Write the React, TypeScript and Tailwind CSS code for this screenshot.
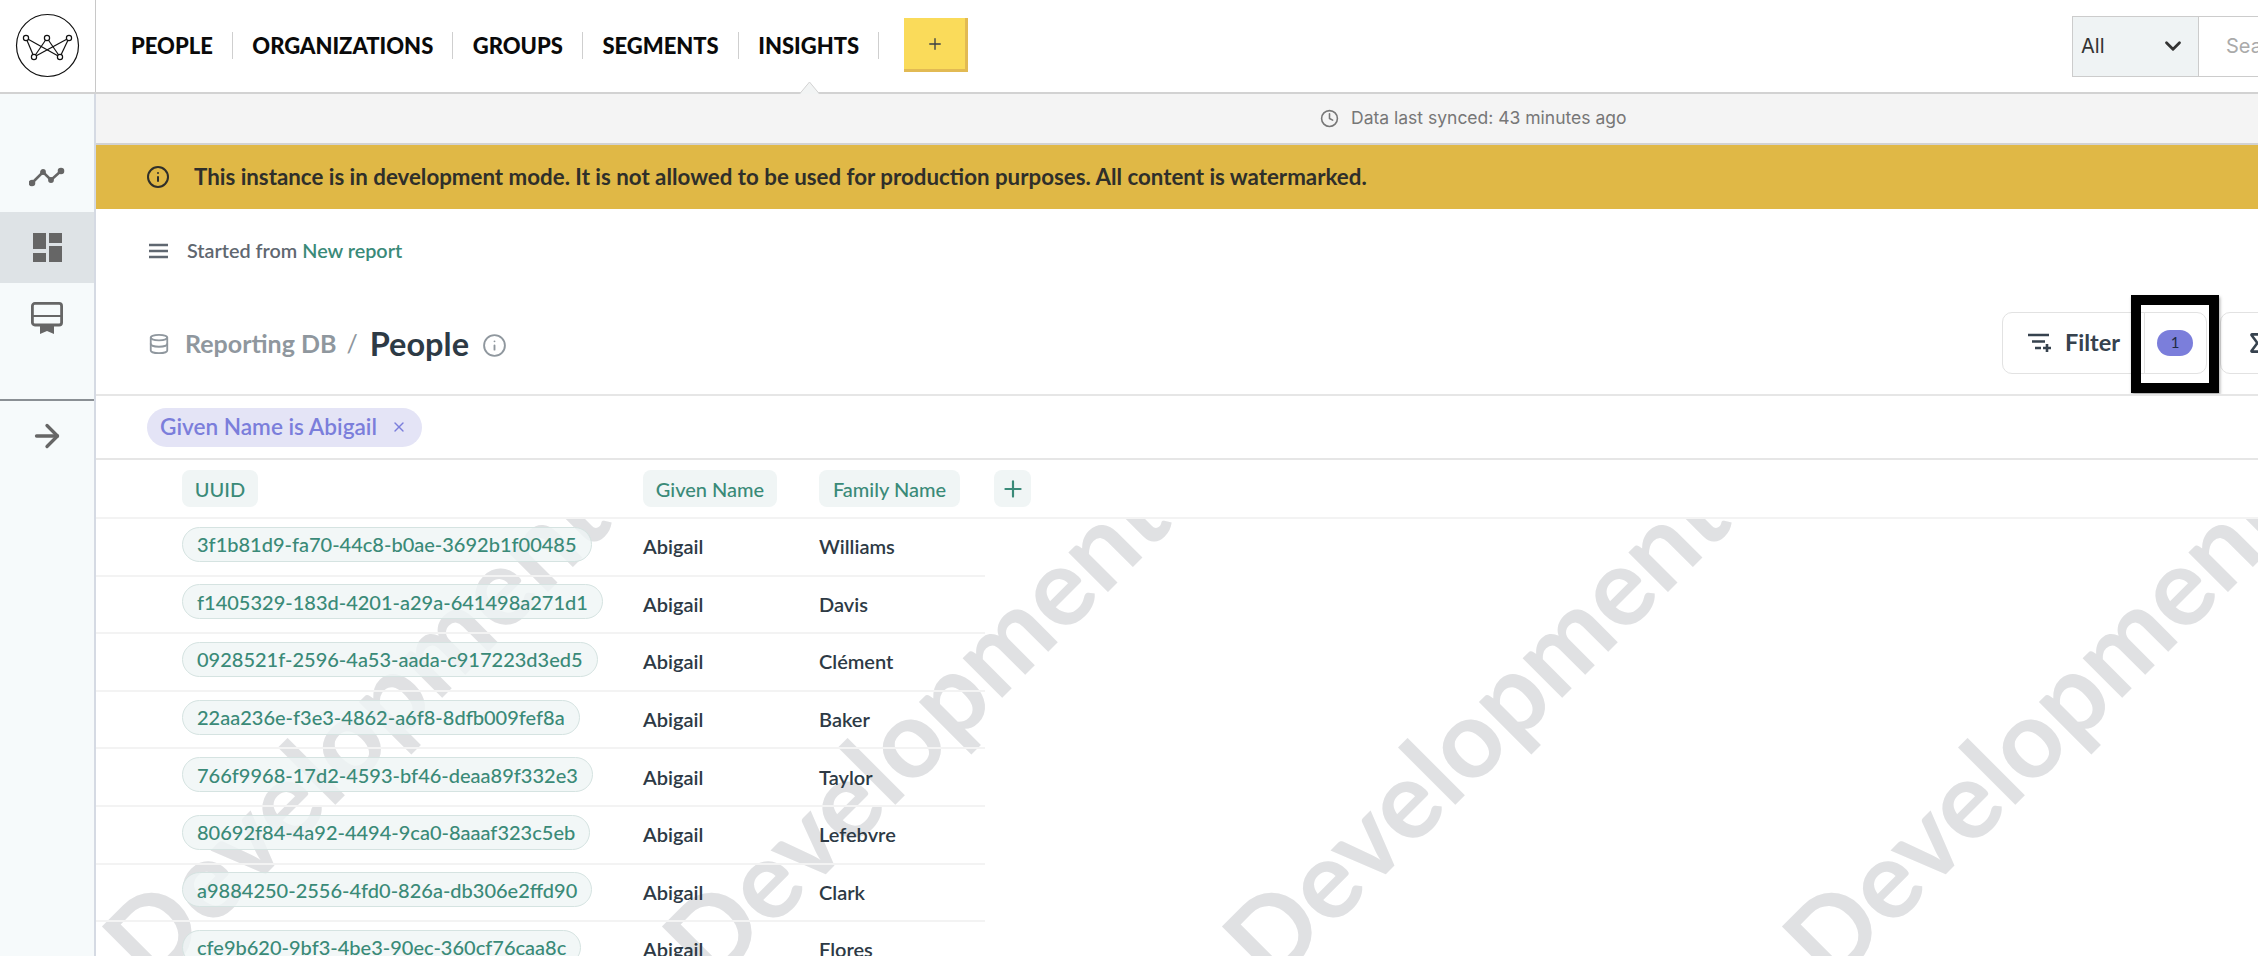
import { ArrowRight, ChevronDown, Clock, Database, Info, Plus, Sigma, X } from "lucide-react";

const NAV = ["PEOPLE", "ORGANIZATIONS", "GROUPS", "SEGMENTS", "INSIGHTS"];

const ROWS = [
  ["3f1b81d9-fa70-44c8-b0ae-3692b1f00485", "Williams"],
  ["f1405329-183d-4201-a29a-641498a271d1", "Davis"],
  ["0928521f-2596-4a53-aada-c917223d3ed5", "Clément"],
  ["22aa236e-f3e3-4862-a6f8-8dfb009fef8a", "Baker"],
  ["766f9968-17d2-4593-bf46-deaa89f332e3", "Taylor"],
  ["80692f84-4a92-4494-9ca0-8aaaf323c5eb", "Lefebvre"],
  ["a9884250-2556-4fd0-826a-db306e2ffd90", "Clark"],
  ["cfe9b620-9bf3-4be3-90ec-360cf76caa8c", "Flores"],
];

function Logo() {
  const top = [[26, 38], [47, 38], [69, 38]];
  const bottom = [[34, 57], [60, 57]];
  return (
    <svg width="95" height="93" viewBox="0 0 95 93" fill="none" stroke="#111" strokeWidth="1.2">
      <circle cx="47.5" cy="45.5" r="31" />
      {top.flatMap(([x1, y1]) =>
        bottom.map(([x2, y2]) => <line key={`${x1}-${x2}`} x1={x1} y1={y1} x2={x2} y2={y2} />)
      )}
      {[...top, ...bottom].map(([cx, cy]) => (
        <circle key={cx} cx={cx} cy={cy} r="2.6" fill="#fff" />
      ))}
    </svg>
  );
}

function TrendIcon() {
  return (
    <svg width="36" height="22" viewBox="0 0 36 22" fill="#666" stroke="#666" strokeWidth="2.6">
      <polyline points="3,17 14,6 22,14 32,5" fill="none" />
      <circle cx="3" cy="17" r="2" />
      <circle cx="14" cy="6" r="1.6" />
      <circle cx="22" cy="14" r="1.6" />
      <circle cx="32" cy="5" r="2" />
    </svg>
  );
}

function DashboardIcon() {
  return (
    <svg width="29" height="29" viewBox="0 0 29 29" fill="#666">
      <rect x="0" y="0" width="13" height="16" />
      <rect x="16" y="0" width="13" height="10" />
      <rect x="0" y="20" width="13" height="9" />
      <rect x="16" y="13" width="13" height="16" />
    </svg>
  );
}

function ReportIcon() {
  return (
    <svg width="32" height="32" viewBox="0 0 32 32" fill="none">
      <rect x="1.4" y="1.4" width="29.2" height="21.6" rx="2.5" stroke="#666" strokeWidth="2.8" />
      <rect x="1" y="13" width="30" height="2" fill="#666" />
      <path d="M9 23h14v9l-7-3-7 3z" fill="#666" />
    </svg>
  );
}

function FilterIcon() {
  return (
    <svg width="26" height="20" viewBox="0 0 26 20" fill="none" stroke="#36424e" strokeWidth="2.6">
      <path d="M1 2h21M5 8.5h13M8 15h6" />
      <path d="M20 11v8M16 15h8" />
    </svg>
  );
}

function Watermark() {
  return (
    <div className="absolute inset-0 flex overflow-hidden">
      {[0, 1, 2, 3].map((i) => (
        <div key={i} className="relative h-full w-[560px] shrink-0">
          <span className="absolute -bottom-[41px] left-[64px] origin-bottom-left -rotate-45 text-[109px] leading-none font-bold whitespace-nowrap text-[#e0e1e3]">
            Development
          </span>
        </div>
      ))}
    </div>
  );
}

function Header() {
  return (
    <header className="flex h-[94px] shrink-0 items-center border-b-2 border-[#d2d2d2] bg-white">
      <div className="flex h-full w-[96px] shrink-0 items-center justify-center border-r border-[#c8c8c8]">
        <Logo />
      </div>
      <nav className="mb-[2px] ml-[35px] flex items-center">
        {NAV.map((item, index) => (
          <div
            key={item}
            className={`relative flex h-[27px] items-center border-r border-[#cfcfcf] pr-[19px] ${index > 0 ? "pl-[19.5px]" : ""}`}
          >
            <span className="text-[22px] font-black text-[#0a0a0a]">{item}</span>
            {item === "INSIGHTS" && (
              <svg width="21" height="14" viewBox="0 0 21 14" className="absolute top-[49px] left-[60px] z-10">
                <path d="M0.5 13 10.5 1 20.5 13z" fill="#f2f4f4" />
                <path d="M0.5 13 10.5 1 20.5 13" fill="none" stroke="#d2d2d2" />
              </svg>
            )}
          </div>
        ))}
      </nav>
      <button className="mb-[2px] ml-[25px] flex h-[54px] w-[64px] items-center justify-center border-r-[3px] border-b-[3px] border-[#e2ba53] bg-[#fadb5a]">
        <Plus size={18} strokeWidth={1.8} color="#3a3f45" />
      </button>
      <div className="ml-auto flex h-[61px] w-[186px] shrink-0 border-y border-[#cccccc]">
        <div className="flex w-[127px] shrink-0 items-center justify-between border-x border-[#cccccc] bg-[#eff3f4] pr-[12px] pl-[8px]">
          <span className="text-[20px] text-[#333] [font-family:Inter,sans-serif]">All</span>
          <ChevronDown size={26} strokeWidth={2.6} color="#333" />
        </div>
        <div className="flex flex-1 items-center overflow-hidden pl-[27px] text-[20px] whitespace-nowrap text-[#aaaaaa] [font-family:Inter,sans-serif]">
          Search
        </div>
      </div>
    </header>
  );
}

function Sidebar() {
  return (
    <aside className="flex w-[96px] shrink-0 flex-col border-r-2 border-[#d5dae3] bg-[#f6fafb]">
      <div className="flex h-[118px] shrink-0 items-center justify-center pt-[47px]">
        <TrendIcon />
      </div>
      <div className="flex h-[71px] shrink-0 items-center justify-center bg-[#dee3e6]">
        <DashboardIcon />
      </div>
      <div className="flex h-[118px] shrink-0 justify-center border-b-2 border-[#8a8f94] pt-[19px]">
        <ReportIcon />
      </div>
      <div className="flex h-[70px] items-center justify-center">
        <ArrowRight size={36} strokeWidth={2.2} color="#666" />
      </div>
    </aside>
  );
}

function Toolbar() {
  return (
    <div className="flex h-[105px] shrink-0 items-center overflow-hidden border-b-2 border-[#e6e6e6]">
      <div className="flex w-[1906px] shrink-0 items-center pt-[3px] pl-[52px]">
        <Database size={22} strokeWidth={2} color="#8f979e" />
        <span className="ml-[15px] text-[25px] font-bold text-[#8f979e]">Reporting DB</span>
        <span className="ml-[10px] text-[25px] text-[#8f979e]">/</span>
        <span className="ml-[12px] text-[32.5px] font-bold text-[#2d3a45]">People</span>
        <Info size={25} strokeWidth={1.8} color="#8f979e" className="mt-[3px] ml-[13px]" />
      </div>
      <div className="relative flex h-[62px] w-[205px] shrink-0 items-center rounded-[10px] border border-[#e2e2e2] pl-[24px]">
        <FilterIcon />
        <span className="ml-[12px] text-[23.5px] font-bold text-[#36424e]">Filter</span>
        <div className="absolute top-0 bottom-0 left-[141px] w-px bg-[#e2e2e2]" />
        <span className="absolute top-[17px] left-[154px] flex h-[26px] w-[36px] items-center justify-center rounded-full bg-[#7b7edb] text-[15px] text-[#1f2a44]">
          1
        </span>
        <div className="absolute -top-[18px] left-[128px] h-[98px] w-[88px] border-[10px] border-black shadow-[1px_2px_3px_rgba(0,0,0,0.35)]" />
      </div>
      <div className="ml-[13px] flex h-[62px] w-[120px] shrink-0 items-center rounded-[10px] border border-[#e2e2e2] pl-[24px]">
        <Sigma size={26} strokeWidth={2.4} color="#36424e" />
      </div>
    </div>
  );
}

function TableHeader() {
  const chip = "flex h-[37px] items-center rounded-[8px] bg-[#f0f5f5] text-[20px] font-medium text-[#3a8a78]";
  return (
    <div className="flex h-[59px] shrink-0 items-center border-b-2 border-[#f3f3f3] pl-[86px]">
      <div className="w-[461px] shrink-0">
        <span className={`${chip} w-[76px] justify-center`}>UUID</span>
      </div>
      <div className="w-[176px] shrink-0">
        <span className={`${chip} w-[134px] justify-center`}>Given Name</span>
      </div>
      <div className="w-[175px] shrink-0">
        <span className={`${chip} w-[141px] justify-center`}>Family Name</span>
      </div>
      <span className={`${chip} w-[37px] justify-center`}>
        <Plus size={26} strokeWidth={2} />
      </span>
    </div>
  );
}

function Row({ uuid, family }: { uuid: string; family: string }) {
  return (
    <div className="flex h-[57.6px] w-[889px] shrink-0 items-center border-b-2 border-[#f3f3f3] pl-[86px]">
      <div className="w-[461px] shrink-0">
        <span className="mb-[5px] inline-flex h-[35px] items-center rounded-full border border-[#d5e3e1] bg-[#eff5f5]/80 px-[14px] text-[20px] font-medium whitespace-nowrap text-[#3a8a78]">
          {uuid}
        </span>
      </div>
      <div className="mb-[1px] w-[176px] shrink-0 text-[20px] font-semibold text-[#2d3a45]">Abigail</div>
      <div className="mb-[1px] text-[20px] font-semibold text-[#2d3a45]">{family}</div>
    </div>
  );
}

export default function App() {
  return (
    <div className="flex h-[956px] w-[2258px] flex-col overflow-hidden bg-white [font-family:Lato,sans-serif]">
      <Header />
      <div className="flex min-h-0 flex-1">
        <Sidebar />
        <main className="flex min-w-0 flex-1 flex-col">
          <div className="flex h-[51px] shrink-0 items-center border-b-2 border-[#d2d2d2] bg-[#f4f4f4] pl-[1224px] text-[17.5px] text-[#777] [font-family:Inter,sans-serif]">
            <Clock size={19} strokeWidth={2} color="#777" />
            <span className="ml-[12px]">Data last synced: 43 minutes ago</span>
          </div>
          <div className="flex h-[64px] shrink-0 items-center bg-[#e0b846] pl-[50px] text-[22.3px] font-bold text-[#2f2f2a]">
            <Info size={24} strokeWidth={2} />
            <span className="ml-[24px]">
              This instance is in development mode. It is not allowed to be used for production purposes. All content is
              watermarked.
            </span>
          </div>
          <div className="flex h-[82px] shrink-0 items-center pt-[2px] pl-[53px] text-[19.8px] font-semibold text-[#5f6770]">
            <svg width="19" height="16" viewBox="0 0 19 16" stroke="#5f6770" strokeWidth="2.4">
              <path d="M0 2h19M0 8h19M0 14h19" />
            </svg>
            <span className="ml-[19px]">Started from</span>
            <span className="ml-[5px] text-[#3a8a78]">New report</span>
          </div>
          <Toolbar />
          <div className="flex h-[64px] shrink-0 items-center border-b-2 border-[#e6e6e6] pl-[51px]">
            <span className="flex h-[39px] items-center rounded-full bg-[#e4e4f6] pr-[15px] pl-[13px] text-[22.6px] font-semibold text-[#7b7edb]">
              Given Name is Abigail
              <X size={16} strokeWidth={2} className="ml-[14px]" />
            </span>
          </div>
          <TableHeader />
          <div className="relative flex min-h-0 flex-1 flex-col overflow-hidden">
            <Watermark />
            <div className="relative flex flex-col">
              {ROWS.map(([uuid, family]) => (
                <Row key={uuid} uuid={uuid} family={family} />
              ))}
            </div>
          </div>
        </main>
      </div>
    </div>
  );
}
